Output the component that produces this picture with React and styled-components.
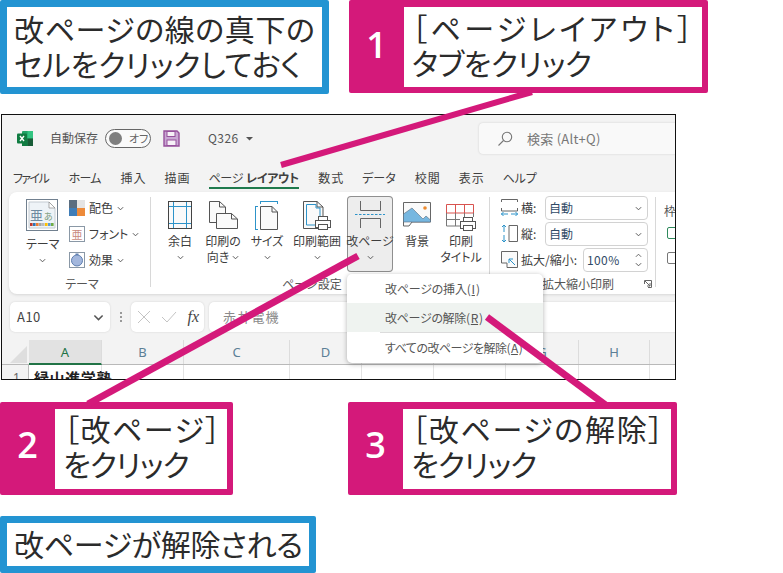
import React from "react";
import styled, { createGlobalStyle } from "styled-components";

const PINK = "#d4197a";
const BLUE = "#2394d2";
const UI = `"Noto Sans CJK JP", "Noto Sans", sans-serif`;

const Global = createGlobalStyle`
  html, body { margin: 0; padding: 0; background: #fff; }
  * { box-sizing: border-box; }
`;

const Page = styled.div`
  position: relative; width: 783px; height: 573px; overflow: hidden; background: #fff;
  font-family: ${UI}; color: #222;
`;
const TopRow = styled.div`display: flex; height: 94px;`;
const BottomRow = styled.div`display: flex; height: 93px; margin-top: 22px;`;

const Note = styled.div`
  border: 7px solid ${BLUE}; border-radius: 2px; background: #fff; width: ${p => p.$w}px; height: ${p => p.$h}px;
  padding: 0 0 2px 7px; display: flex; flex-direction: column; justify-content: center;
  flex: none; margin-top: ${p => p.$top || 0}px;
`;
const BigLine = styled.div`
  font-size: 30px; line-height: 35px; white-space: nowrap; font-weight: 400; color: #2b2b2b;
  font-feature-settings: "palt"; letter-spacing: ${p => p.$ls || 0}px; padding-left: ${p => p.$in || 0}px;
`;
const Callout = styled.div`
  display: flex; flex: none; width: ${p => p.$w}px; height: 93px; margin-left: ${p => p.$ml || 0}px;
  background: ${PINK}; border-radius: 2px; padding: 7px 6px 6px 0;
`;
const Num = styled.div`
  width: ${p => p.$nw}px; flex: none; display: flex; align-items: center; justify-content: center; padding-bottom: ${p => p.$pb}px;
  color: #fff; font-family: "Open Sans", sans-serif; font-size: 36px; font-weight: 600;
`;
const CalloutBody = styled.div`
  flex: 1; background: #fff; padding: 0 0 ${p => p.$pb}px 8px; display: flex; flex-direction: column; justify-content: center;
`;

const Win = styled.div`
  position: relative; width: 675px; height: 266px; margin: 20px 0 0 1px; border: 1px solid #111; background: #f3f3f3; overflow: hidden;
  font-size: 12px; color: #3d3d3d; font-feature-settings: "palt"; line-height: 16px;
`;
const TitleBar = styled.div`display: flex; align-items: center; height: 46px; padding: 0 0 0 15px; white-space: nowrap;`;
const AutoSave = styled.span`margin-left: 16px; color: #555;`;
const Toggle = styled.div`
  display: flex; align-items: center; width: 46px; height: 19px; margin-left: 7px; border: 1px solid #666; border-radius: 10px; padding-left: 3px; background: #fafafa; font-size: 11px; color: #666; gap: 7px;
`;
const Knob = styled.span`width: 13px; height: 13px; border-radius: 50%; background: #7f7f7f;`;
const SaveSvg = styled.svg`margin-left: 12px; flex: none;`;
const DocName = styled.span`margin-left: 28px; color: #555; letter-spacing: .4px;`;
const Caret = styled.svg`margin-left: 7px; flex: none;`;
const Search = styled.div`
  display: flex; align-items: center; gap: 14px; position: absolute; left: 477px; top: 8px; width: 210px; height: 31px; padding-left: 18px; background: #f9f9f9; border-radius: 4px; box-shadow: 0 0 2px #c8c8c8; color: #777; font-size: 13px; letter-spacing: .25px;
`;
const Tabs = styled.div`display: flex; gap: 19px; height: 31px; padding-left: 11px; white-space: nowrap;`;
const Tab = styled.div`
  padding-top: 9px; height: 28px; color: #404040; letter-spacing: ${p => p.$ls || 0}px; margin-right: ${p => -(p.$ls || 0)}px;
  border-bottom: 2px solid ${p => p.$on ? "#1f7a4d" : "transparent"};
`;
const Strong = styled.b`font-weight: 700; margin-left: 3px;`;

const Ribbon = styled.div`
  display: flex; height: 102px; margin-left: 7px; width: 680px; background: #fff; border-radius: 8px; box-shadow: 0 1px 3px #d6d6d6;
`;
const Group = styled.div`
  position: relative; flex: none; width: ${p => p.$w}px; padding: 4px 0 0 ${p => p.$pad || 0}px;
`;
const GroupBody = styled.div`display: flex; height: 76px; gap: ${p => p.$gap || 0}px;`;
const GroupLabel = styled.div`
  margin-top: 4px; text-align: center; padding-right: ${p => p.$pr || 0}px; color: #555; white-space: nowrap;
`;
const Divider = styled.div`flex: none; width: 1px; height: 90px; margin-top: 5px; background: #d8d8d8;`;
const LargeBtn = styled.div`
  flex: none; width: ${p => p.$w}px; height: 76px; margin-left: ${p => p.$ml || 0}px; padding-top: 5px; text-align: center; white-space: nowrap; border-radius: 4px;
  ${p => p.$on ? `background:#ededed; box-shadow: inset 0 0 0 1px #8f8f8f;` : ""}
`;
const IconSlot = styled.div`height: 30px; margin-bottom: 2px; padding-top: ${p => p.$top || 0}px; display: flex; justify-content: center;`;
const BtnLine = styled.div`height: 16px; display: flex; align-items: center; justify-content: center; gap: 3px;`;
const ThemeCol = styled.div`flex: none; width: 32px; padding-top: 3px; text-align: center; white-space: nowrap; margin-left: 0;`;
const ThemeLabel = styled.div`margin-top: 2px; height: 16px;`;
const StackCol = styled.div`display: flex; flex-direction: column; gap: 10px; padding-top: 4px;`;
const StackRow = styled.div`display: flex; align-items: center; gap: 4px; height: 16px; white-space: nowrap;`;
const ScaleCol = styled.div`display: flex; flex-direction: column; gap: 2px; width: 147px;`;
const ScaleRow = styled.div`display: flex; align-items: center; height: 24px; gap: 3px; white-space: nowrap;`;
const Combo = styled.div`
  display: flex; align-items: center; justify-content: space-between; margin-left: auto; width: ${p => p.$w}px; height: 24px; padding: 0 5px 0 3px; background: #fff; border: 1px solid #d2d2d2; border-radius: 4px; color: #2f4a66; letter-spacing: ${p => p.$ls || 0}px;
`;
const Spin = styled.div`display: flex; flex-direction: column; gap: 3px;`;
const Launcher = styled.div`position: absolute; right: 3px; top: 88px; display: flex;`;
const Frag = styled.div`padding-top: 7px; color: #555;`;
const Check = styled.div`
  width: 12px; height: 12px; margin: ${p => p.$mt}px 0 0 3px; border: 1px solid ${p => p.$on ? "#2f8a5c" : "#777"}; border-radius: 2px; background: #fff;
`;

const FormulaBar = styled.div`display: flex; align-items: center; height: 46px; padding: 0 0 0 8px;`;
const Field = styled.div`
  display: flex; align-items: center; height: 30px; background: #fff; border-radius: 5px; box-shadow: 0 0 2px #cfcfcf; flex: none; width: ${p => p.$w ? p.$w + "px" : "auto"}; margin-left: ${p => p.$ml || 0}px; padding: 0 ${p => p.$pr || 0}px 0 ${p => p.$pl || 0}px; justify-content: ${p => p.$between ? "space-between" : "flex-start"};
`;
const NameText = styled.span`font-size: 13px; color: #444; letter-spacing: .5px;`;
const Grip = styled.div`flex: none; width: 21px; display: flex; flex-direction: column; align-items: center; gap: 2px;`;
const GripDot = styled.span`width: 2px; height: 2px; background: #999;`;
const Fx = styled.i`font-family: "Liberation Serif", serif; font-size: 16px; font-weight: 400; color: #444;`;
const Formula = styled.span`font-size: 13px; color: #8a8a8a; letter-spacing: 1.2px;`;

const ColHead = styled.div`display: flex; height: 25px; padding-left: 27px; border-bottom: 1px solid #b9b9b9; position: relative;`;
const Corner = styled.svg`position: absolute; left: 8px; top: 6px;`;
const Col = styled.div`
  flex: none; width: ${p => p.$w}px; display: flex; align-items: center; justify-content: center; font-size: 13px; color: ${p => p.$on ? "#217346" : "#5c7f96"}; font-family: "Noto Sans", sans-serif; border-right: 1px solid #dcdcdc;
  ${p => p.$on ? "background:#e2e2e2; border-bottom:2px solid #217346; height:25px;" : ""}
`;
const DataRow = styled.div`display: flex; height: 16px; background: #fff;`;
const RowNum = styled.div`flex: none; width: 27px; padding: 5px 0 0 11px; color: #666; background: #f3f3f3; border-right: 1px solid #bbb; font-family: "Noto Sans", sans-serif;`;
const Cell = styled.div`
  flex: none; width: ${p => p.$w}px; height: 20px; border-right: 1px solid #e3e3e3; font-weight: ${p => p.$b ? 700 : 400}; font-size: 15px; line-height: 20px; color: #222; padding: 3px 0 0 5px; white-space: nowrap; letter-spacing: .6px;
`;

const Menu = styled.div`
  position: absolute; left: 345px; top: 159px; width: 196px; height: 89px; background: #fff; border-radius: 5px; box-shadow: 0 1px 5px rgba(0,0,0,.3); padding-top: 1px; z-index: 2; color: #555;
`;
const MenuItem = styled.div`
  height: ${p => p.$h}px; padding-left: 38px; display: flex; align-items: center; white-space: nowrap; letter-spacing: ${p => p.$ls || 0}px;
  ${p => p.$on ? "background:#eff3f0;" : ""}
`;
const MenuSep = styled.div`height: 1px; margin-left: 33px; background: #dcdcdc;`;
const Under = styled.span`text-decoration: underline; margin: 0 1px;`;

const Lines = styled.svg`position: absolute; left: 0; top: 0; z-index: 3; pointer-events: none;`;

const Chev = ({ s = 7 }) => (
  <svg width={s} height={s} viewBox="0 0 8 8"><path d="M1 2.5 4 5.5 7 2.5" fill="none" stroke="#555" strokeWidth="1.1" /></svg>
);

const ExcelIcon = () => (
  <svg width="17" height="17" viewBox="0 0 17 17">
    <rect x="5" y="1" width="11" height="15" rx="1" fill="#21a366" />
    <rect x="10.5" y="1" width="5.5" height="7.5" fill="#33c481" />
    <rect x="5" y="8.5" width="5.5" height="7.5" fill="#107c41" />
    <rect x="10.5" y="8.5" width="5.5" height="7.5" fill="#185c37" />
    <rect x="0" y="3.5" width="10" height="10" rx="1" fill="#107c41" />
    <path d="M3 6 7 11M7 6 3 11" stroke="#fff" strokeWidth="1.4" />
  </svg>
);
const SaveIcon = () => (
  <SaveSvg width="17" height="17" viewBox="0 0 17 17">
    <path d="M1 1H14L16 3V16H1Z" fill="#c9a6d3" stroke="#96509c" strokeWidth="1.4" />
    <rect x="4" y="1.5" width="8" height="5" fill="#f6f0f7" stroke="#96509c" />
    <rect x="4" y="10" width="9" height="5.5" fill="#f6f0f7" stroke="#96509c" />
  </SaveSvg>
);
const Mag = () => (
  <svg width="16" height="16" viewBox="0 0 16 16" fill="none" stroke="#777" strokeWidth="1.1"><circle cx="10" cy="6" r="4.7" /><path d="M6.5 9.5 1.5 14.5" /></svg>
);
const ThemeIcon = () => (
  <svg width="32" height="32" viewBox="0 0 32 32">
    <rect x=".5" y=".5" width="31" height="31" fill="#fff" stroke="#71808f" />
    <path d="M3 3H23L29 9V29H3Z" fill="#eef3f7" stroke="#c4ccd3" />
    <path d="M23 3V9H29Z" fill="#fff" stroke="#8a8a8a" strokeWidth=".7" />
    <text x="4" y="21" fontSize="13" fill="#6f8aa0" fontFamily={UI}>亜</text>
    <text x="18" y="21" fontSize="9" fill="#7a9a7a" fontFamily={UI}>あ</text>
    {["#c0392b", "#2e75b6", "#ed7d31", "#a5a5a5", "#bbb", "#ffc000", "#5b9bd5", "#70ad47"].map((c, i) => (
      <rect key={c} x={4 + i * 3} y="24" width="2.6" height="3" fill={c} />
    ))}
  </svg>
);
const ColorsIcon = () => (
  <svg width="16" height="16" viewBox="0 0 16 16">
    <rect width="8" height="8" fill="#5a6d80" /><rect x="8" width="8" height="8" fill="#e4e4e4" />
    <rect y="8" width="8" height="8" fill="#3f7db8" /><rect x="8" y="8" width="8" height="8" fill="#ed8a3a" />
  </svg>
);
const FontIcon = () => (
  <svg width="16" height="16" viewBox="0 0 16 16">
    <rect x=".5" y=".5" width="15" height="15" fill="#fff" stroke="#8a98a6" />
    <text x="2.5" y="12.5" fontSize="11" fill="#c98a80" fontFamily={UI}>亜</text>
  </svg>
);
const EffectIcon = () => (
  <svg width="16" height="16" viewBox="0 0 16 16">
    <rect x=".5" y=".5" width="15" height="15" fill="#fff" stroke="#8a98a6" />
    <circle cx="8" cy="8.5" r="5.5" fill="#a3b7dd" stroke="#5f7fb0" />
    <rect x="6.5" y="1.5" width="3" height="1.5" fill="#5f7fb0" />
  </svg>
);
const MarginIcon = () => (
  <svg width="24" height="28" viewBox="0 0 24 28" fill="none">
    <rect x=".5" y=".5" width="23" height="27" fill="#fafafa" />
    <path d="M.5 5.5H23.5M.5 22.5H23.5M5.5 .5V27.5M18.5 .5V27.5" stroke="#2d93c9" />
    <rect x=".5" y=".5" width="23" height="27" stroke="#444" />
  </svg>
);
const page = "M.5 .5H10.5L16.5 6V21.5H.5Z";
const OrientIcon = () => (
  <svg width="29" height="28" viewBox="0 0 29 28" fill="none" stroke="#555">
    <path d={page} fill="#fafafa" />
    <path d="M10.5 .5V6H16.5" />
    <path d="M7.5 12.5H22.5L28.5 18V27.5H7.5Z" fill="#fafafa" />
    <path d="M22.5 12.5V18H28.5" />
  </svg>
);
const SizeIcon = () => (
  <svg width="24" height="30" viewBox="0 0 24 30" fill="none">
    <path d="M5.5 .5H22.5M5.5 0V3M22.5 0V3" stroke="#2d93c9" />
    <path d="M.5 5.5V28.5M0 5.5H3M0 28.5H3" stroke="#2d93c9" />
    <path d="M5.5 5.5H17L22.5 11V28.5H5.5Z" fill="#fafafa" stroke="#555" />
    <path d="M17 5.5V11H22.5" stroke="#555" />
  </svg>
);
const Printer = ({ x, y }) => (
  <g transform={`translate(${x} ${y})`} fill="#fff" stroke="#555">
    <rect x="3.5" y=".5" width="9" height="4" />
    <rect x=".5" y="4.5" width="15" height="7" />
    <rect x="3.5" y="8.5" width="9" height="5" />
  </g>
);
const AreaIcon = () => (
  <svg width="28" height="30" viewBox="0 0 28 30" fill="none">
    <path d="M.5 .5H14L20 6V27.5H.5Z" fill="#fafafa" stroke="#555" />
    <path d="M14 .5V6H20" stroke="#555" />
    <path d="M3.5 3.5H13V7H17V24H3.5Z" stroke="#2d93c9" />
    <Printer x={12} y={15} />
  </svg>
);
const BreakIcon = () => (
  <svg width="30" height="27" viewBox="0 0 30 27" fill="none">
    <path d="M5.5 0V9.5H25.5V0M5.5 17.5V27M5.5 17.5H25.5V27" stroke="#666" />
    <path d="M0 13.5H30" stroke="#2d93c9" strokeDasharray="2.5 1.5" />
  </svg>
);
const PictureIcon = () => (
  <svg width="28" height="26" viewBox="0 0 28 26">
    <path d="M.5 .5H27.5V20H9L6 24H.5Z" fill="#fafafa" stroke="#666" />
    <path d="M.5 12 9 6 20 17 23 14 27.5 18V20H.5Z" fill="#76b7e0" stroke="#5a6d80" strokeWidth=".6" />
    <circle cx="22" cy="6" r="1.8" fill="#ed8a2e" />
  </svg>
);
const TitleIcon = () => (
  <svg width="31" height="27" viewBox="0 0 31 27" fill="none">
    <path d="M.5 .5H27.5V9H.5Z" stroke="#d9534f" />
    <path d="M9.5 .5V9M18.5 .5V9" stroke="#d9534f" />
    <path d="M.5 9V22H14M9.5 9V22M.5 15.5H14M18.5 9V13M27.5 9V13" stroke="#777" />
    <Printer x={14} y={13} />
  </svg>
);
const WidthIcon = () => (
  <svg width="17" height="18" viewBox="0 0 17 18" fill="none">
    <path d="M.5 3V.5H16.5V3M.5 9V12M16.5 9V12M.5 12H16.5" stroke="#666" />
    <path d="M0 15H7M10 15H17M2.5 13 .5 15 2.5 17M14.5 13 16.5 15 14.5 17" stroke="#2d93c9" />
  </svg>
);
const HeightIcon = () => (
  <svg width="17" height="18" viewBox="0 0 17 18" fill="none">
    <path d="M3 0V7M3 10V17M1 2 3 0 5 2M1 15 3 17 5 15" stroke="#2d93c9" />
    <path d="M8 .5H16.5V16.5H8Z" stroke="#666" />
  </svg>
);
const ScaleIcon = () => (
  <svg width="17" height="18" viewBox="0 0 17 18" fill="none">
    <path d="M.5 .5H16.5V16.5H6V12H.5Z" stroke="#666" fill="#fafafa" />
    <path d="M14 14 8 8M8 12V8H12" stroke="#2d93c9" />
  </svg>
);
const LaunchIcon = () => (
  <svg width="8" height="8" viewBox="0 0 8 8" fill="none" stroke="#666"><path d="M.5 4V.5H7.5V7.5H4" /><path d="M1 1 6 6M3 6H6V3" /></svg>
);
const XIcon = () => (
  <svg width="14" height="14" viewBox="0 0 14 14" fill="none" stroke="#c4c4c4"><path d="M1 1 13 13M13 1 1 13" /></svg>
);
const OkIcon = () => (
  <svg width="16" height="12" viewBox="0 0 16 12" fill="none" stroke="#c4c4c4"><path d="M1 6 6 11 15 1" /></svg>
);

const TABS = [["ファイル", -1.6], ["ホーム", -.8], ["挿入", 1], ["描画", 1]];
const TABS2 = [["数式", 1], ["データ", 0], ["校閲", 1], ["表示", 1], ["ヘルプ", -.2]];
const COLS = [["A", 73], ["B", 82], ["C", 106], ["D", 72], ["E", 72], ["F", 72], ["G", 73], ["H", 71], ["", 30]];

export default function App() {
  return (
    <Page>
      <Global />
      <TopRow>
        <Note $w={329} $h={94}>
          <BigLine $ls={.6}>改ページの線の真下の</BigLine>
          <BigLine>セルをクリックしておく</BigLine>
        </Note>
        <Callout $w={359} $ml={20}>
          <Num $nw={55} $pb={5}>1</Num>
          <CalloutBody $pb={4}>
            <BigLine $ls={3.4} $in={-1}>［ページレイアウト］</BigLine>
            <BigLine $ls={-.4}>タブをクリック</BigLine>
          </CalloutBody>
        </Callout>
      </TopRow>

      <Win>
        <TitleBar>
          <ExcelIcon />
          <AutoSave>自動保存</AutoSave>
          <Toggle><Knob />オフ</Toggle>
          <SaveIcon />
          <DocName>Q326</DocName>
          <Caret width="7" height="5" viewBox="0 0 7 5"><path d="M0 1H7L3.5 4.5Z" fill="#555" /></Caret>
          <Search><Mag />検索 (Alt+Q)</Search>
        </TitleBar>
        <Tabs>
          {TABS.map(([t, ls]) => <Tab key={t} $ls={ls}>{t}</Tab>)}
          <Tab $on $ls={-.35}>ページ<Strong>レイアウト</Strong></Tab>
          {TABS2.map(([t, ls]) => <Tab key={t} $ls={ls}>{t}</Tab>)}
        </Tabs>
        <Ribbon>
          <Group $w={141} $pad={17}>
            <GroupBody $gap={11}>
              <ThemeCol>
                <ThemeIcon />
                <ThemeLabel>テーマ</ThemeLabel>
                <BtnLine><Chev /></BtnLine>
              </ThemeCol>
              <StackCol>
                <StackRow><ColorsIcon />配色<Chev /></StackRow>
                <StackRow><FontIcon />フォント<Chev /></StackRow>
                <StackRow><EffectIcon />効果<Chev /></StackRow>
              </StackCol>
            </GroupBody>
            <GroupLabel $pr={12}>テーマ</GroupLabel>
          </Group>
          <Divider />
          <Group $w={338} $pad={8}>
            <GroupBody>
              <LargeBtn $w={42}><IconSlot><MarginIcon /></IconSlot><BtnLine>余白</BtnLine><BtnLine><Chev /></BtnLine></LargeBtn>
              <LargeBtn $w={44}><IconSlot><OrientIcon /></IconSlot><BtnLine>印刷の</BtnLine><BtnLine>向き<Chev /></BtnLine></LargeBtn>
              <LargeBtn $w={44}><IconSlot><SizeIcon /></IconSlot><BtnLine>サイズ</BtnLine><BtnLine><Chev /></BtnLine></LargeBtn>
              <LargeBtn $w={56}><IconSlot><AreaIcon /></IconSlot><BtnLine>印刷範囲</BtnLine><BtnLine><Chev /></BtnLine></LargeBtn>
              <LargeBtn $w={46} $ml={2} $on><IconSlot><BreakIcon /></IconSlot><BtnLine>改ページ</BtnLine><BtnLine><Chev /></BtnLine></LargeBtn>
              <LargeBtn $w={48}><IconSlot $top={1}><PictureIcon /></IconSlot><BtnLine>背景</BtnLine></LargeBtn>
              <LargeBtn $w={40}><IconSlot $top={3}><TitleIcon /></IconSlot><BtnLine>印刷</BtnLine><BtnLine>タイトル</BtnLine></LargeBtn>
            </GroupBody>
            <GroupLabel $pr={24}>ページ設定</GroupLabel>
          </Group>
          <Divider />
          <Group $w={165} $pad={11}>
            <ScaleCol>
              <ScaleRow><WidthIcon />横:<Combo $w={103}>自動<Chev /></Combo></ScaleRow>
              <ScaleRow><HeightIcon />縦:<Combo $w={103}>自動<Chev /></Combo></ScaleRow>
              <ScaleRow><ScaleIcon />拡大/縮小:<Combo $w={65} $ls={.4}>100%<Spin><svg width="7" height="5" viewBox="0 0 8 5"><path d="M1 4 4 1 7 4" fill="none" stroke="#555" /></svg><Chev /></Spin></Combo></ScaleRow>
            </ScaleCol>
            <GroupLabel>拡大縮小印刷</GroupLabel>
            <Launcher><LaunchIcon /></Launcher>
          </Group>
          <Divider />
          <Group $w={30} $pad={8}>
            <Frag>枠</Frag>
            <Check $on $mt={8} />
            <Check $mt={13} />
          </Group>
        </Ribbon>
        <FormulaBar>
          <Field $w={100} $pl={7} $pr={6} $between><NameText>A10</NameText><Chev s={11} /></Field>
          <Grip><GripDot /><GripDot /><GripDot /></Grip>
          <Field $w={73} $pl={6} $pr={5} $between><XIcon /><OkIcon /><Fx>fx</Fx></Field>
          <Field $w={480} $ml={5} $pl={14}><Formula>赤井電機</Formula></Field>
        </FormulaBar>
        <ColHead>
          <Corner width="17" height="17" viewBox="0 0 17 17"><path d="M17 0V17H0Z" fill="#dedede" /></Corner>
          {COLS.map(([c, w]) => <Col key={c} $w={w} $on={c === "A"}>{c}</Col>)}
        </ColHead>
        <DataRow>
          <RowNum>1</RowNum>
          <Cell $w={73} $b>緑山進学塾</Cell>
          {COLS.slice(1).map(([c, w]) => <Cell key={c} $w={w} />)}
        </DataRow>
        <Menu>
          <MenuItem $h={28} $ls={-.2}>改ページの挿入(<Under>I</Under>)</MenuItem>
          <MenuItem $h={29} $on $ls={-.3}>改ページの解除(<Under>R</Under>)</MenuItem>
          <MenuSep />
          <MenuItem $h={30} $ls={-.5}>すべての改ページを解除(<Under>A</Under>)</MenuItem>
        </Menu>
      </Win>

      <BottomRow>
        <Callout $w={233}>
          <Num $nw={55} $pb={9}>2</Num>
          <CalloutBody $pb={7}>
            <BigLine $ls={1.5} $in={1}>［改ページ］</BigLine>
            <BigLine $ls={-.8}>をクリック</BigLine>
          </CalloutBody>
        </Callout>
        <Callout $w={329} $ml={115}>
          <Num $nw={55} $pb={9}>3</Num>
          <CalloutBody $pb={7}>
            <BigLine $ls={1.7} $in={1}>［改ページの解除］</BigLine>
            <BigLine $ls={-.9}>をクリック</BigLine>
          </CalloutBody>
        </Callout>
      </BottomRow>
      <Note $w={316} $h={57} $top={21}>
        <BigLine $ls={-.3}>改ページが解除される</BigLine>
      </Note>

      <Lines width="783" height="573" viewBox="0 0 783 573" fill="none" stroke={PINK}>
        <path d="M281 165 532 92" strokeWidth="6" />
        <path d="M358 256 88 404" strokeWidth="7" />
        <path d="M487 317 607 406" strokeWidth="7" />
      </Lines>
    </Page>
  );
}
